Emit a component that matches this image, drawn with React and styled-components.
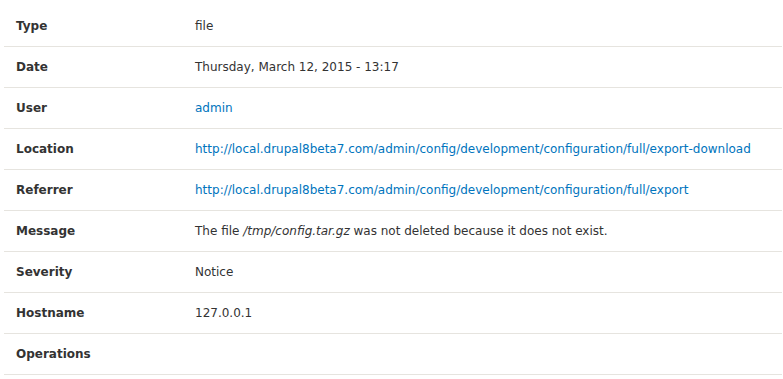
import styled, { createGlobalStyle } from "styled-components";

const GlobalStyle = createGlobalStyle`
  body {
    margin: 0;
    padding: 6px 1px 0 4px;
    background: #fff;
    font-family: "DejaVu Sans", sans-serif;
    font-size: 12px;
    color: #333;
  }
`;

const DetailsTable = styled.table`
  width: 100%;
  border-collapse: collapse;
  border-spacing: 0;
`;

const Row = styled.tr`
  border-bottom: 1px solid #e6e4df;
`;

const Label = styled.th`
  width: 155px;
  height: 40px;
  padding: 0 12px;
  text-align: left;
  font-weight: bold;
  color: #333;
  vertical-align: middle;
`;

const Value = styled.td`
  padding: 0 12px;
  vertical-align: middle;
  color: #333;
`;

const Link = styled.a`
  color: #0074bd;
  text-decoration: none;
`;

const rows = [
  { label: "Type", value: "file" },
  { label: "Date", value: "Thursday, March 12, 2015 - 13:17" },
  { label: "User", value: <Link href="#">admin</Link> },
  {
    label: "Location",
    value: (
      <Link href="#">
        http://local.drupal8beta7.com/admin/config/development/configuration/full/export-download
      </Link>
    ),
  },
  {
    label: "Referrer",
    value: (
      <Link href="#">
        http://local.drupal8beta7.com/admin/config/development/configuration/full/export
      </Link>
    ),
  },
  {
    label: "Message",
    value: (
      <>
        The file <em>/tmp/config.tar.gz</em> was not deleted because it does not
        exist.
      </>
    ),
  },
  { label: "Severity", value: "Notice" },
  { label: "Hostname", value: "127.0.0.1" },
  { label: "Operations", value: "" },
];

export default function App() {
  return (
    <>
      <GlobalStyle />
      <DetailsTable>
        <tbody>
          {rows.map((r) => (
            <Row key={r.label}>
              <Label>{r.label}</Label>
              <Value>{r.value}</Value>
            </Row>
          ))}
        </tbody>
      </DetailsTable>
    </>
  );
}
